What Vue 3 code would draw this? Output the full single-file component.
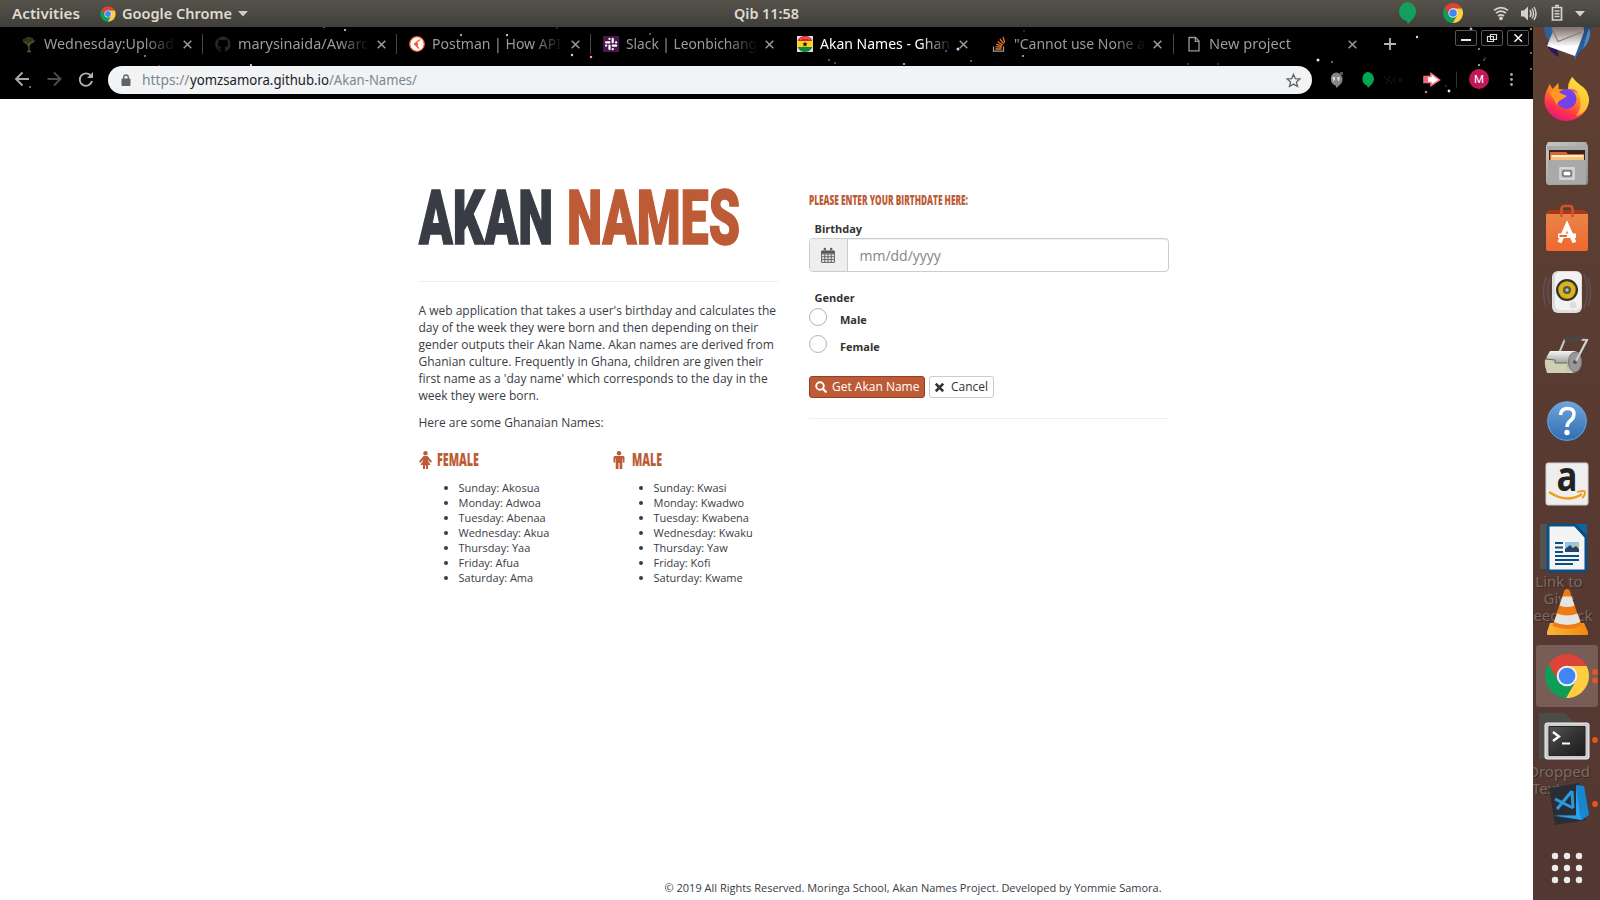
<script setup>
import { h } from 'vue'

// Single line of text fitted to a fixed width
const Fit = (p) =>
  h('svg', { width: p.w, height: p.h, 'aria-label': p.t }, [
    h('text', { x: 0, y: p.b, textLength: p.w, lengthAdjust: 'spacingAndGlyphs', fill: 'currentColor' }, p.t)
  ])
Fit.props = ['w', 'h', 'b', 't']

const tabs = [
  { t: 'Wednesday:Upload', w: 130, icon: 'tree' },
  { t: 'marysinaida/Awarc', w: 130, icon: 'github' },
  { t: 'Postman | How API', w: 129, icon: 'postman' },
  { t: 'Slack | Leonbichang', w: 131, icon: 'slack' },
  { t: 'Akan Names - Ghan', w: 130, icon: 'ghana', active: true },
  { t: '"Cannot use None a', w: 131, icon: 'stack' },
  { t: 'New project', w: 82, icon: 'page' }
]

const stars = [
  [145, 56, 1.3, '#999'], [251, 65, 1.5, '#ddd'], [345, 30, 1.4, '#ddd'], [324, 27, 1.2, '#888'], [461, 35, 1.4, '#ccc'],
  [507, 35, 1.5, '#ddd'], [159, 66, 1.2, '#a43'], [30, 87, 1.4, '#68a'], [572, 55, 1.6, '#ecc'], [591, 57, 1.7, '#f99'],
  [557, 28, 1.1, '#655'], [650, 34, 1.3, '#777'], [829, 60, 1.4, '#958'], [835, 63, 1.3, '#757'], [904, 64, 1.4, '#ccc'],
  [946, 51, 1.3, '#85a'], [958, 49, 2, '#dce'], [971, 61, 1.3, '#96a'], [1023, 56, 1.4, '#bbb'], [1024, 31, 1.1, '#555'],
  [1188, 64, 1.1, '#777'], [1218, 64, 1.1, '#666'], [1318, 60, 2, '#fdd'], [1332, 62, 1.2, '#a88'],
  [1417, 37, 1.6, '#ddd'], [1471, 29, 1.9, '#baa'], [1479, 49, 1.4, '#a9a'], [1484, 60, 1.2, '#757'], [1479, 65, 1.4, '#bbb'],
  [1426, 92, 1.5, '#daa'], [1449, 91, 1.9, '#fdd'], [1531, 53, 1.4, '#a78'], [1531, 69, 1.4, '#a78'], [1531, 29, 1.6, '#987'],
  [1446, 86, 1.1, '#744'], [1485, 58, 1, '#666']
]

const female = ['Sunday: Akosua', 'Monday: Adwoa', 'Tuesday: Abenaa', 'Wednesday: Akua', 'Thursday: Yaa', 'Friday: Afua', 'Saturday: Ama']
const male = ['Sunday: Kwasi', 'Monday: Kwadwo', 'Tuesday: Kwabena', 'Wednesday: Kwaku', 'Thursday: Yaw', 'Friday: Kofi', 'Saturday: Kwame']
</script>

<template>
  <div class="desktop">
    <svg class="defs" width="0" height="0">
      <defs>
        <symbol id="chrome" viewBox="0 0 48 48">
          <path d="M44.4 13.5A23 23 0 0 0 4.7 11.6L14.9 29.25 24 24V13.5Z" fill="#db4437" />
          <path d="M44.4 13.5A23 23 0 0 0 4.7 11.6L14.9 29.25 24 24V13.5Z" fill="#ffcd40" transform="rotate(120 24 24)" />
          <path d="M44.4 13.5A23 23 0 0 0 4.7 11.6L14.9 29.25 24 24V13.5Z" fill="#0f9d58" transform="rotate(240 24 24)" />
          <circle cx="24" cy="24" r="10.7" fill="#f1f1f1" />
          <circle cx="24" cy="24" r="8.7" fill="#4285f4" />
        </symbol>
        <linearGradient id="gBird" x1="0" y1="0" x2="0" y2="1"><stop offset="0" stop-color="#27405f" /><stop offset="1" stop-color="#2a6fc0" /></linearGradient>
        <linearGradient id="gFox" x1=".8" y1="0" x2=".3" y2="1"><stop offset="0" stop-color="#fff44f" /><stop offset=".4" stop-color="#ff9a1f" /><stop offset=".75" stop-color="#ff3647" /><stop offset="1" stop-color="#e31587" /></linearGradient>
        <linearGradient id="gMail" x1="0" y1="0" x2="0" y2="1"><stop offset="0" stop-color="#6a564c" /><stop offset=".3" stop-color="#8b7d76" /><stop offset=".75" stop-color="#fff" /></linearGradient>
        <linearGradient id="gSteel" x1="0" y1="0" x2="1" y2="1"><stop offset="0" stop-color="#c9c9c7" /><stop offset="1" stop-color="#8d8d8b" /></linearGradient>
        <linearGradient id="gBag" x1="0" y1="0" x2="0" y2="1"><stop offset="0" stop-color="#e8874c" /><stop offset="1" stop-color="#f0682f" /></linearGradient>
        <linearGradient id="gHelp" x1="0" y1="0" x2="0" y2="1"><stop offset="0" stop-color="#6ea5dc" /><stop offset="1" stop-color="#2f6eb2" /></linearGradient>
        <linearGradient id="gRoll" x1="0" y1="0" x2="0" y2="1"><stop offset="0" stop-color="#f4f4f2" /><stop offset=".5" stop-color="#a8a8a4" /><stop offset="1" stop-color="#d2d2c0" /></linearGradient>
        <linearGradient id="gTerm" x1="0" y1="0" x2="1" y2="1"><stop offset="0" stop-color="#555" /><stop offset=".5" stop-color="#333" /><stop offset="1" stop-color="#1c1c1c" /></linearGradient>
        <linearGradient id="gCone" x1="0" y1="0" x2="1" y2="0"><stop offset="0" stop-color="#ffb43a" /><stop offset="1" stop-color="#f08a0a" /></linearGradient>
      </defs>
    </svg>

    <header class="topbar">
      <Fit class="act" :w="68" :h="27" :b="19" t="Activities" />
      <svg class="ci" width="16" height="16"><use href="#chrome" /></svg>
      <Fit class="gc" :w="110" :h="27" :b="19" t="Google Chrome" />
      <svg class="tri" width="10" height="6"><path d="M0 0H10L5 5.5Z" fill="#cfcbc4" /></svg>
      <Fit class="clock" :w="65" :h="27" :b="18.500" t="Qib 11:58" />
      <svg class="tray" width="200" height="27" viewBox="1396 0 200 27">
        <path d="M1407 2a9 9.500 0 0 1 9 9.500c0 5-4 8.500-8 12.500l-1.500-3.200A9 9.500 0 0 1 1407 2Z" fill="#159f5c" />
        <svg x="1442.500" y="2.500" width="21" height="21"><use href="#chrome" /></svg>
        <g fill="none" stroke="#d5d2cc" stroke-width="1.700"><path d="M1494 10.300q7-5.500 14 0M1496 13.200q5-4 10 0M1498 16q3-2.200 6 0" /></g>
        <circle cx="1501" cy="18.300" r="1.900" fill="#d5d2cc" />
        <path d="M1521 10.500h3l4-4v14l-4-4h-3Z" fill="#d5d2cc" />
        <g fill="none" stroke="#d5d2cc" stroke-width="1.400"><path d="M1530 10q2 3.500 0 7M1532 8.500q3 5 0 10M1534 7q4 6.500 0 13" /></g>
        <path d="M1552.500 7.500h9v12.500h-9ZM1555 5.700h4" fill="none" stroke="#d5d2cc" stroke-width="1.700" />
        <path d="M1554.500 11h5M1554.500 13.700h5M1554.500 16.500h5" stroke="#d5d2cc" stroke-width="1.400" />
        <path d="M1575 11h10l-5 5.500Z" fill="#d5d2cc" />
      </svg>
    </header>

    <div class="workspace">
      <div class="window">
        <div class="browser">
          <svg class="sky" width="1533" height="72" viewBox="0 27 1533 72">
            <circle v-for="(s, i) in stars" :key="i" :cx="s[0]" :cy="s[1]" :r="s[2] * 0.75" :fill="s[3]" />
          </svg>
          <div class="tabs">
            <div v-for="tab in tabs" :key="tab.t" class="tab" :class="{ on: tab.active, nosep: tab.icon === 'slack' || tab.icon === 'ghana' || tab.icon === 'page' }">
              <svg class="fav" width="16" height="16" viewBox="0 0 16 16">
                <g v-if="tab.icon === 'tree'" stroke="#3b4427" fill="#2b331d">
                  <path d="M2 4l3-2 3-1 3 1 3 3-2 2-3-1-1 2-2-2-3 1Z" stroke-dasharray="1.500 1" /><path d="M8 6v10M8 10L4 6M8 9l4-4M6 15.500h4" stroke="#555a32" stroke-width="1.300" />
                </g>
                <path v-else-if="tab.icon === 'github'" fill="#25282c" d="M8 .5a7.800 7.800 0 0 0-2.500 15.200c.4.100.5-.2.500-.4v-1.500c-2.200.5-2.700-1-2.700-1-.4-.9-.9-1.200-.9-1.200-.7-.5.100-.5.100-.5.800.1 1.200.8 1.200.8.700 1.200 1.900.9 2.300.7.100-.5.300-.9.500-1.100-1.800-.2-3.600-.9-3.600-3.900 0-.9.300-1.600.8-2.100-.1-.2-.4-1 .1-2.100 0 0 .7-.2 2.200.8a7.500 7.500 0 0 1 4 0c1.500-1 2.200-.8 2.200-.8.400 1.100.2 1.900.1 2.100.5.500.8 1.200.8 2.100 0 3-1.800 3.700-3.600 3.900.3.300.6.800.6 1.500v2.200c0 .2.100.5.500.4A7.800 7.800 0 0 0 8 .5Z" />
                <g v-else-if="tab.icon === 'postman'"><circle cx="8" cy="8" r="7.300" fill="#fff" stroke="#f0582b" stroke-width="1.300" /><path d="M11 3.500L5.500 8l4.500 4.500M9 7.500l-2 .5 2 1.500" fill="none" stroke="#f0582b" stroke-width="1.300" /></g>
                <g v-else-if="tab.icon === 'slack'"><path d="M0 0h16v16H0Z" fill="#4a154b" /><path d="M6.500 2.800v.2M6.500 6.300H3M9.700 2.900v3.400M13.200 6.300h-.2M3 9.600h.2M6.500 9.600v3.500M9.700 9.600h3.500M9.700 13v.2" stroke="#fff" stroke-width="2.200" stroke-linecap="round" /></g>
                <g v-else-if="tab.icon === 'ghana'"><path d="M0 0h16v16H0Z" fill="#ddd" /><path d="M.6 5A8 8 0 0 1 15.400 5Z" fill="#d8222a" /><path d="M.6 5a8 8 0 0 0 0 6h14.800a8 8 0 0 0 0-6Z" fill="#f7d51b" /><path d="M.6 11a8 8 0 0 0 14.800 0Z" fill="#14853c" /><path d="M8 5.500l.8 1.800 1.900.1-1.500 1.200.5 1.900L8 9.500l-1.700 1 .5-1.900-1.500-1.200 1.900-.1Z" fill="#111" /><path d="M3 3.500q5-3.500 10 0" stroke="#f08080" fill="none" /></g>
                <g v-else-if="tab.icon === 'stack'" fill="none"><path d="M2.500 10.500v4.700h10v-4.700" stroke="#999" stroke-width="1.300" /><path d="M4.500 13h6M4.600 10.600l6 .8M5.200 8.200l5.700 2M6.700 5.500l5 3.500M9 3l3.800 4.800M12 1l1.700 5.500" stroke="#e87922" stroke-width="1.300" /></g>
                <path v-else d="M3 1.500h6.500L13 5v9.800H3ZM9.300 1.500V5.300H13" fill="none" stroke="#999" stroke-width="1.300" />
              </svg>
              <div class="label"><Fit :w="tab.w" :h="22" :b="16" :t="tab.t" /></div>
              <svg class="x" width="9" height="9"><path d="M.7.7l7.600 7.600M8.300.7L.7 8.300" stroke="#9b9b9b" stroke-width="1.500" /></svg>
            </div>
            <svg class="plus" width="12" height="12"><path d="M6 0v12M0 6h12" stroke="#b5b5b5" stroke-width="1.800" /></svg>
            <div class="wbtns">
              <div class="wb"><svg width="20" height="14"><path d="M5 9h10" stroke="#eee" stroke-width="2" /></svg></div>
              <div class="wb"><svg width="20" height="14"><path d="M8.500 3.500h6v5h-6ZM5.500 5.500h6v5h-6Z" stroke="#ddd" fill="none" stroke-width="1.200" /></svg></div>
              <div class="wb"><svg width="20" height="14"><path d="M6.500 3.200l7.500 7.600M14 3.200l-7.500 7.600" stroke="#fff" stroke-width="1.400" /></svg></div>
            </div>
          </div>
          <div class="toolbar">
            <svg class="nav" width="93" height="28" viewBox="0 66 93 28">
              <g fill="none" stroke-width="1.900"><path d="M29 79H16.500M22.500 72.500l-6.500 6.500 6.500 6.500" stroke="#aaa" /><path d="M47.500 79H60M54 72.500l6.500 6.500L54 85.500" stroke="#4d4d4d" /><path d="M91 76A6.200 6.200 0 1 0 92 81" stroke="#b0b0b0" /></g>
              <path d="M93 72v6h-6Z" fill="#b0b0b0" />
            </svg>
            <div class="omni">
              <svg class="lock" width="10" height="13"><path d="M1.500 4.500h7q1 0 1 1v5.500q0 1-1 1h-7q-1 0-1-1V5.500q0-1 1-1Z" fill="#5f6368" /><path d="M2.700 5V3.300a2.300 2.300 0 0 1 4.600 0V5" fill="none" stroke="#5f6368" stroke-width="1.300" /></svg>
              <Fit class="url" :w="47.500" :h="28" :b="19" t="https://" /><Fit class="url host" :w="139" :h="28" :b="19" t="yomzsamora.github.io" /><Fit class="url" :w="88" :h="28" :b="19" t="/Akan-Names/" />
              <svg class="fave" width="15" height="15" viewBox="0 0 15 15"><path d="M7.500 1.400l1.800 4.200 4.600.4-3.500 3 1.100 4.500-4-2.400-4 2.400L4.600 9l-3.500-3 4.600-.4Z" fill="none" stroke="#5f6368" stroke-width="1.300" /></svg>
            </div>
            <svg class="ext" width="221" height="32" viewBox="1312 64 221 32">
              <path d="M1336 72.500a6.500 6.700 0 0 1 6.500 6.700c0 4-3 6-6 8.800l-1-2.500a6.500 6.700 0 0 1 .5-13Z" fill="#858585" /><path d="M1332.500 77h2.500v3l-1.500 1.500M1337 77h2.500v3l-1.500 1.500" fill="#ddd" /><path d="M1340 72h3v3h-3Z" fill="#555" />
              <path d="M1367.500 72a6.500 7 0 0 1 6.500 7c0 4-3.500 6-6 9l-1-2.500a6.500 7 0 0 1 .5-13.500Z" fill="#00a651" />
              <g stroke="#181818" fill="none"><path d="M1386 84l4-8M1384 77l8 6M1395 77q-3 3 0 6M1398 79h4M1398 81h4" /></g>
              <path d="M1424 76.500h7v-3l8.500 6.500-8.500 5.500v-3h-7Z" fill="#fff" stroke="#f27a86" stroke-width="1.500" /><path d="M1424 76.500h4v6h-4Z" fill="#f4636f" />
              <path d="M1456.500 71.500v16" stroke="#333" />
              <circle cx="1479" cy="79" r="10" fill="#c2185b" /><text x="1479" y="83" text-anchor="middle" font-size="11.500" fill="#fff" class="av">M</text>
              <g fill="#aaa"><circle cx="1511.500" cy="74.500" r="1.400" /><circle cx="1511.500" cy="79.500" r="1.400" /><circle cx="1511.500" cy="84.500" r="1.400" /></g>
            </svg>
          </div>
        </div>

        <main class="page">
          <div class="cols">
            <section class="left">
              <h1><Fit class="dark" :w="134" :h="62" :b="57" t="AKAN" /><Fit class="rust" :w="173" :h="62" :b="57" t="NAMES" /></h1>
              <hr />
              <p>A web application that takes a user's birthday and calculates the day of the week they were born and then depending on their gender outputs their Akan Name. Akan names are derived from Ghanian culture. Frequently in Ghana, children are given their first name as a 'day name' which corresponds to the day in the week they were born.</p>
              <p>Here are some Ghanaian Names:</p>
              <div class="lists">
                <div class="list">
                  <h3>
                    <svg width="13" height="18" viewBox="0 0 13 18"><circle cx="6.500" cy="2.300" r="2.200" fill="#bc5b36" /><path d="M4.500 5h4L13 10.500l-1.500 1.200L9 8.800v1L11.500 14H9v4H7v-3.500H6V18H4v-4H1.500L4 9.800v-1L1.500 11.700 0 10.500Z" fill="#bc5b36" /></svg>
                    <Fit :w="42" :h="20" :b="16" t="FEMALE" />
                  </h3>
                  <ul><li v-for="n in female" :key="n">{{ n }}</li></ul>
                </div>
                <div class="list">
                  <h3 class="m">
                    <svg width="12" height="18" viewBox="0 0 12 18"><circle cx="6" cy="2.300" r="2.200" fill="#bc5b36" /><path d="M2 5h8q1.500 0 1.500 1.500V11.500H9.800V7.500H9.300V18H6.600v-6H5.500v6H2.700V7.500H2.200v4H.5v-5Q.5 5 2 5Z" fill="#bc5b36" /></svg>
                    <Fit :w="30" :h="20" :b="16" t="MALE" />
                  </h3>
                  <ul><li v-for="n in male" :key="n">{{ n }}</li></ul>
                </div>
              </div>
            </section>
            <section class="right">
              <h4><Fit :w="159" :h="16" :b="13" t="PLEASE ENTER YOUR BIRTHDATE HERE:" /></h4>
              <label class="lb">Birthday</label>
              <div class="group">
                <span class="addon"><svg width="14" height="15" viewBox="0 0 14 15"><path d="M.6 3h12.800v11.400H.6ZM.6 6h12.800M.6 8.800h12.800M.6 11.600h12.800M3.800 6v8.400M7 6v8.400M10.200 6v8.400" fill="none" stroke="#555" stroke-width=".9" /><path d="M.6 3h12.800v2.500H.6Z" fill="#555" /><path d="M3.800.8v3M10.200.8v3" stroke="#555" stroke-width="2.200" stroke-linecap="round" /><path d="M3.800 1.500v2M10.200 1.500v2" stroke="#bbb" stroke-width=".7" /></svg></span>
                <span class="field">mm/dd/yyyy</span>
              </div>
              <label class="lb g">Gender</label>
              <div class="opt"><i></i><b>Male</b></div>
              <div class="opt"><i></i><b>Female</b></div>
              <div class="btns">
                <button class="go"><svg width="12" height="12"><circle cx="5" cy="5" r="3.800" fill="none" stroke="#fff" stroke-width="1.900" /><path d="M7.800 7.800l3 3" stroke="#fff" stroke-width="2.300" stroke-linecap="round" /></svg>Get Akan Name</button>
                <button class="no"><svg width="9" height="9"><path d="M1.700 1.700l5.600 5.600M7.300 1.700L1.700 7.300" stroke="#333" stroke-width="2.600" stroke-linecap="square" /></svg>Cancel</button>
              </div>
              <hr />
            </section>
          </div>
          <footer>© 2019 All Rights Reserved. Moringa School, Akan Names Project. Developed by Yommie Samora.</footer>
        </main>
      </div>

      <aside class="dock">
        <div class="ghost one"><span>Link to</span><span>Give</span><span>Feedback</span></div>
        <div class="ghost two"><span>Dropped</span><span class="txt">Text…</span></div>
        <div class="cells">
          <svg viewBox="0 0 67 64"><path d="M11 20q0 12 6 18l8-18Z" fill="#2f6299" /><path d="M44 18h13q3 10-2 19-4 8-10 12l-3 7-2-6Z" fill="url(#gBird)" /><path d="M56 24q4 10-6 21l3-12Z" fill="#4a88cc" /><path d="M13 39l11 6 2 8q-9-4-13-14Z" fill="#251a5c" /><path d="M18 14h32l1 14L42 52 14 42l6-15Z" fill="url(#gMail)" /><path d="M19 24l6 13.500L49 28" stroke="#857d78" stroke-width="1.300" fill="none" /></svg>
          <svg viewBox="0 0 67 64"><path d="M39 9q4 5 8 8 9 6 9 16A22.500 22 0 0 1 11.500 35q-.5-9 4-16l1-3 3 5 6-6v6l9 1Z" fill="url(#gFox)" /><circle cx="33.500" cy="31" r="10" fill="#7542e5" /><path d="M16 24q7-3 11 1l7 3-6 4q-3 1-4 5-4-7-8-13Z" fill="#ff9b21" /><path d="M34 22q7-4 11 3-5-3-11-3Z" fill="#b336c9" /><path d="M39 9q-6 8-3 12 10 0 11 10 2 10-4 17 13-4 13-18Q54 20 47 17q-5-4-8-8Z" fill="#ffd83c" opacity=".75" /></svg>
          <svg viewBox="0 0 67 64"><path d="M15 10h38l2 4v35q0 4-3 4H16q-3 0-3-4V14Z" fill="url(#gSteel)" /><path d="M14 14h40v4H14Z" fill="#aaa" /><path d="M16 18h36v11H16Z" fill="#3a241b" /><path d="M17 20h16l2 2h16v8H17Z" fill="#d7682f" /><path d="M18 23h33v5H18Z" fill="#f8c37b" /><path d="M19 24h31" stroke="#fff" stroke-width="1.300" /><path d="M15 28h38v24H15Z" fill="#a9a9a7" /><path d="M27 36h14v11H27Z" fill="#bbb" stroke="#e2e2e2" stroke-width="1.300" /><path d="M30 39h8v5h-8Z" fill="#fff" stroke="#444" /></svg>
          <svg viewBox="0 0 67 64"><path d="M13 18l4-4h33l5 4v35q0 2-2 2H15q-2 0-2-2Z" fill="url(#gBag)" /><path d="M13 18l4-4h33l5 4Z" fill="#a63a18" /><path d="M28.500 21v-8q0-3 3-3h5q3 0 3 3v8" stroke="#cf562b" stroke-width="2.500" fill="none" /><path d="M26.500 46.500l7.500-17 7.500 17" stroke="#fff" stroke-width="4.200" fill="none" /><path d="M25 37.500h18v4.500H25Z" fill="#fff" /><path d="M26.500 39h7.500v2h-7.500Z" fill="#ef672f" /></svg>
          <svg viewBox="0 0 67 64"><g stroke="#6480b8" stroke-width="1.500" fill="none" opacity=".3"><path d="M17 18q-5 13 0 26M13 17q-5 14 0 30M51 14q7 17 0 34M55 18q5 14 0 28" /></g><rect x="19" y="11" width="30" height="42" rx="6" fill="#ddd" /><rect x="22" y="12" width="26" height="38" rx="5" fill="#f2f2f0" /><circle cx="34" cy="30" r="11" fill="#333" /><circle cx="34" cy="30" r="8.700" fill="#ddb417" /><circle cx="34" cy="30" r="4" fill="#555" /><circle cx="34" cy="30" r="1.700" fill="#bbb" /><circle cx="40" cy="45" r="3.500" fill="#ddd" /></svg>
          <svg viewBox="0 0 67 64"><path d="M24 34L32 15l22 1-11 21" stroke="#c8c8c8" stroke-width="2" fill="none" /><path d="M33 15h14" stroke="#464646" stroke-width="4" stroke-linecap="round" /><path d="M17 27L42 27q7 2 6 12-1 9-9 10H14Q10 36 17 27Z" fill="url(#gRoll)" /><ellipse cx="42" cy="38" rx="6.500" ry="10" fill="#989898" stroke="#777" /><circle cx="42" cy="38" r="2" fill="#555" /><path d="M54 16L43 37" stroke="#d0d0d0" stroke-width="1.800" /><path d="M12 35l10 1v3h12v10H15q-4-6-3-14Z" fill="#cfcfb4" /><path d="M12 35l10 1v3h12" stroke="#656557" fill="none" /></svg>
          <svg viewBox="0 0 67 64"><circle cx="34" cy="34" r="20" fill="#254f82" opacity=".5" /><circle cx="34" cy="33" r="19.300" fill="url(#gHelp)" stroke="#72a6d9" /><path d="M27.500 27q.5-6.500 7-6.500 6.500 0 6.500 5.500 0 4-4 7-3 2.500-3 6" fill="none" stroke="#fff" stroke-width="3.500" /><circle cx="34" cy="44.500" r="2.700" fill="#fff" /></svg>
          <svg viewBox="0 0 67 64"><rect x="13" y="11" width="42" height="42" rx="2" fill="#eee" stroke="#cfcfcf" /><text x="34" y="38.500" text-anchor="middle" font-family="Open Sans" font-weight="700" font-size="41" textLength="21" lengthAdjust="spacingAndGlyphs" fill="#222">a</text><path d="M16 40q18 12 33 2" stroke="#f59a1b" stroke-width="2.500" fill="none" /><path d="M44 40q8-2 8 0 0 4-3 6" stroke="#f59a1b" stroke-width="1.800" fill="none" /></svg>
          <svg viewBox="0 0 67 64"><path d="M7 8h35v45H7Z" fill="#53534f" /><path d="M42 8h12v12Z" fill="#0a66a5" /><path d="M16 9h26l11 12v32q0 2-2 2H17q-2 0-2-2V11q0-2 1-2Z" fill="#f4f4f4" stroke="#0a4e84" stroke-width="3" /><path d="M22 27h8M22 31.500h8M22 36h8M22 40h24M22 44h24M22 48h18" stroke="#0a4e84" stroke-width="2" /><path d="M32 26h14v10H32Z" fill="#8ec6ed" /><path d="M32 36v-3l5-4 3 3 3-2 3 3v3Z" fill="#28445e" /><circle cx="43.500" cy="28.500" r="1.500" fill="#f5c52b" /></svg>
          <svg viewBox="0 0 67 64"><path d="M17 43h34l4 9v2q0 1-1 1H15q-1 0-1-1v-2Z" fill="url(#gCone)" /><path d="M31.500 10q2.500-2 5 0l12 36q-14 6-29 0Z" fill="#f07a14" /><path d="M29.500 16.500h9l3 9q-7.500 3-15 0ZM24 33.500q10 4 20.500 0l3 8.500q-13 6-26.500 0Z" fill="#e4e4e2" /></svg>
          <div class="active"><svg width="46" height="46"><use href="#chrome" /></svg></div>
          <svg viewBox="0 0 67 64"><path d="M6 5h26l11 11v35H6Z" fill="#4b4b48" /><rect x="12" y="15" width="44" height="36" rx="2" fill="#ccc" stroke="#eee" /><path d="M16 18.500h36v29H16Z" fill="url(#gTerm)" stroke="#222" /><path d="M20 24l6 4.500-6 4.500" stroke="#fff" stroke-width="2.300" fill="none" /><path d="M29 35.500h8" stroke="#fff" stroke-width="2" /></svg>
          <svg viewBox="0 0 67 64"><path d="M16 16l30-5 7 37-31 5Z" fill="#2b2d35" /><path d="M43 13l8 1 5 29-7 5-27-4 24-1Z" fill="#1588cf" /><path d="M43 13l4 30 2 5-28-5 22 1Z" fill="#2ba0eb" /><path d="M39 19L24 37M22 27l18 9ZM39 19l1 17" stroke="#2b9be0" stroke-width="3" fill="none" /></svg>
          <svg viewBox="0 0 67 64"><g fill="#ececea"><template v-for="y in [20, 32, 44]" :key="y"><circle v-for="x in [22, 34, 46]" :key="x" :cx="x" :cy="y" r="3.200" /></template></g></svg>
        </div>
        <svg class="dots" width="6" height="150" viewBox="0 0 6 150"><g fill="#e95420"><circle cx="3" cy="4" r="2.900" /><circle cx="3" cy="12.500" r="2.900" /><circle cx="3" cy="72" r="2.900" /><circle cx="3" cy="136" r="2.900" /></g></svg>
      </aside>
    </div>
  </div>
</template>

<style>
body { margin: 0; overflow: hidden; }
</style>

<style scoped>
.desktop { width: 1600px; height: 900px; overflow: hidden; background: #fff; font-family: "Open Sans", "Noto Sans", sans-serif; display: flex; flex-direction: column; }
svg { display: block; flex: none; overflow: visible; }
.defs { position: absolute; }
.topbar { height: 27px; flex: none; display: flex; align-items: center; background: linear-gradient(#56534b, #403e39); color: #dfdbd2; font: 600 15px "Noto Sans", sans-serif; }
.act { margin-left: 12px; }
.ci { margin-left: 20px; }
.gc { margin-left: 6px; }
.tri { margin-left: 5.500px; }
.clock { margin-left: 486.500px; }
.tray { margin-left: auto; margin-right: 4px; }
.workspace { flex: 1; display: flex; min-height: 0; }
.window { width: 1533px; display: flex; flex-direction: column; }
.browser { height: 72px; flex: none; background: #000; position: relative; }
.sky { position: absolute; left: 0; top: 0; overflow: hidden; }
.tabs { height: 39px; display: flex; padding-left: 9px; position: relative; }
.tab { width: 194.100px; height: 20px; margin-top: 7px; flex: none; display: flex; align-items: center; box-sizing: border-box; padding-left: 12px; border-right: 1px solid #454545; color: #9c9c9c; font: 15px "Noto Sans", sans-serif; }
.tab.nosep { border-color: transparent; }
.tab.on { color: #fff; }
.fav { margin-right: 7px; }
.label { width: 132px; height: 22px; -webkit-mask-image: linear-gradient(90deg, #000 76%, transparent); mask-image: linear-gradient(90deg, #000 76%, transparent); }
.x { margin-left: 7px; }
.plus { margin: 11px 0 0 16px; }
.wbtns { display: flex; gap: 4px; margin: 3px 0 0 59px; }
.wb { width: 20px; height: 14px; border: 1px solid #555; border-radius: 2px; background: #050505; }
.toolbar { height: 28px; display: flex; align-items: center; position: relative; }
.omni { margin-left: 15px; width: 1204px; height: 28px; border-radius: 14px; background: #f1f3f4; display: flex; align-items: center; box-sizing: border-box; padding-left: 13px; }
.lock { margin-right: 11px; }
.url { color: #80868b; font: 15px "Noto Sans", sans-serif; }
.host { color: #202124; }
.fave { margin-left: auto; margin-right: 11px; }
.av { font-family: Roboto, sans-serif; }
.page { flex: 1; display: flex; flex-direction: column; background: #fff; color: #393c44; font-size: 12px; line-height: 17px; }
.cols { display: flex; padding: 88px 0 0 418.500px; gap: 30px; flex: 1; }
.left, .right { width: 360px; }
h1 { display: flex; gap: 14.500px; margin: 0; height: 62px; font: 900 75.500px Roboto, sans-serif; }
h1 svg { stroke: currentColor; stroke-width: 1.600px; }
.dark { color: #393c44; }
.rust { color: #bc5b36; }
hr { border: 0; border-top: 1px solid #eee; margin: 0; }
.left hr { margin: 32px 0 20px; }
p { margin: 0 0 10px; }
.lists { display: flex; margin-top: 19px; }
.list { width: 195px; flex: none; }
h3 { display: flex; align-items: center; margin: 0 0 10px; height: 20px; gap: 5px; color: #bc5b36; font: 800 17px "Open Sans", sans-serif; }
h3.m { gap: 7px; margin-left: -1px; }
ul { margin: 0; padding-left: 40px; font-size: 11px; line-height: 15px; }
h4 { margin: 5px 0 13px; height: 16px; color: #bc5b36; font: 800 13.500px "Open Sans", sans-serif; }
.lb { display: block; padding-left: 6px; height: 17px; font-weight: 700; font-size: 11px; line-height: 16px; color: #333; }
.group { display: flex; height: 34px; box-sizing: border-box; border: 1px solid #ccc; border-radius: 4px; overflow: hidden; }
.addon { width: 37px; background: #eee; border-right: 1px solid #ccc; display: flex; align-items: center; justify-content: center; }
.field { flex: 1; padding-left: 12px; font-size: 14px; line-height: 34px; color: #858585; box-shadow: inset 0 1px 1px rgba(0, 0, 0, .07); }
.lb.g { margin-top: 18px; margin-bottom: 1px; }
.opt { display: flex; height: 18px; margin-bottom: 9px; font-size: 11px; color: #333; }
.opt i { width: 16px; height: 16px; border: 1px solid #b4b4b4; border-radius: 50%; margin-right: 13.500px; }
.opt b { line-height: 24px; }
.btns { display: flex; gap: 4px; margin: 23px 0 20px; }
button { height: 22px; box-sizing: border-box; border-radius: 3px; padding: 0 5px; font: 12px/20px "Open Sans", sans-serif; display: flex; align-items: center; white-space: nowrap; }
.go { width: 116px; background: #bc5b36; border: 1px solid #963f22; color: #fff; gap: 5.500px; }
.no { width: 65px; background: #fff; border: 1px solid #ccc; color: #333; gap: 7.500px; }
footer { height: 20px; margin-bottom: 2px; line-height: 20px; padding-left: 664.500px; white-space: nowrap; font-size: 11px; }
.dock { width: 67px; position: relative; overflow: hidden; background: linear-gradient(#5f4032, #583a31 50%, #533732); }
.cells { display: flex; flex-direction: column; margin-top: -23px; position: relative; }
.cells > * { width: 67px; height: 64px; }
.cells > .active { width: 62px; height: 62px; margin: 1px 0 1px 3px; border-radius: 3px; background: #775d56; display: flex; align-items: center; justify-content: center; }
.ghost { position: absolute; left: -10px; width: 72px; text-align: center; color: #7a6a60; font: 15px/17px "Noto Sans", sans-serif; display: flex; flex-direction: column; align-items: center; text-shadow: 1px 1px #3b2a24; }
.ghost .txt { align-self: flex-start; margin-left: 9px; }
.one { top: 546px; }
.two { top: 736px; }
.dots { position: absolute; right: 2px; top: 641px; }
</style>
